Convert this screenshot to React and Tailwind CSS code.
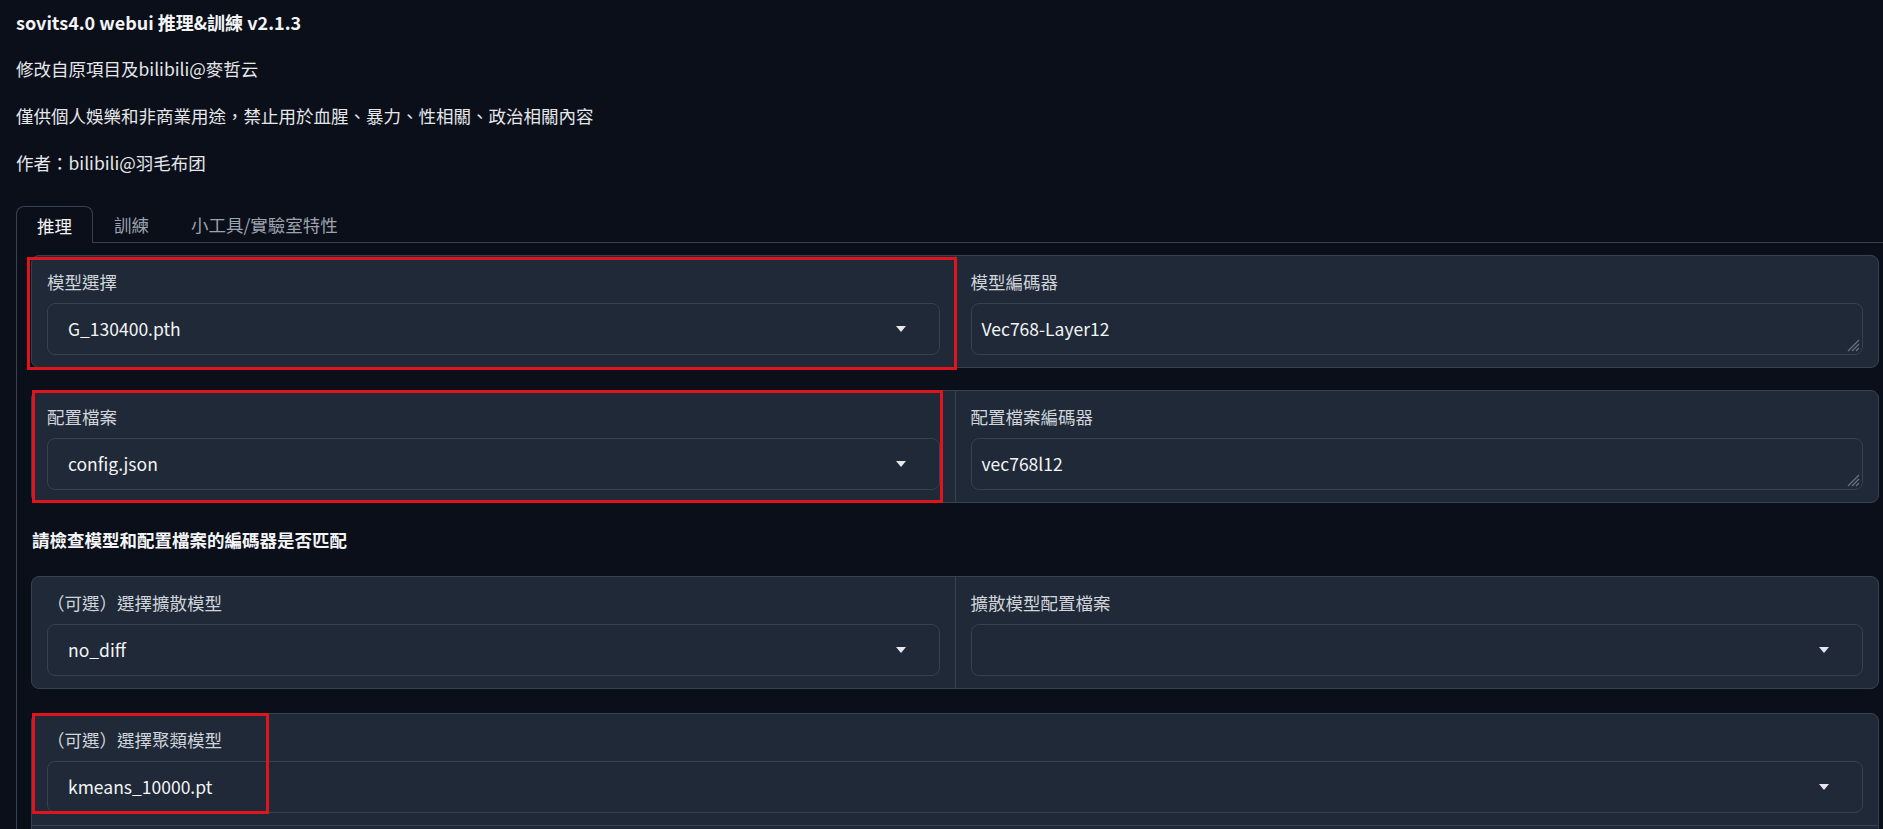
import React from 'react';

// Small caret used by every dropdown box.
function Caret() {
  return (
    <svg width="10" height="6" viewBox="0 0 10 6" className="shrink-0">
      <polygon points="0,0 10,0 5,6" fill="#e5e7eb" />
    </svg>
  );
}

// Diagonal resize grip for the textareas.
function Grip() {
  return (
    <svg width="13" height="13" viewBox="0 0 13 13" className="absolute right-[2px] bottom-[2px]">
      <path d="M12 1L1 12M12 5L5 12M12 9L9 12" stroke="#6b7280" strokeWidth="1.2" />
    </svg>
  );
}

function Dropdown({ value }) {
  return (
    <div className="h-[52px] rounded-[8px] border border-[#374151] bg-[#1f2937] flex items-center justify-between pl-[20px] pr-[33px] text-[#f3f4f6]">
      <span>{value}</span>
      <Caret />
    </div>
  );
}

function TextBox({ value }) {
  return (
    <div className="relative h-[52px] rounded-[8px] border border-[#374151] bg-[#1f2937] flex items-center pl-[10px] text-[#f3f4f6]">
      <span>{value}</span>
      <Grip />
    </div>
  );
}

function Block({ label, children }) {
  return (
    <div className="bg-[#1f2937] px-[15px] pt-[13px] pb-[12px]">
      <div className="h-[26px] leading-[26px] text-[#d1d5db]">{label}</div>
      <div className="mt-[8px]">{children}</div>
    </div>
  );
}

// Gradio form: blocks separated by a 1px line of the border colour.
function Form({ cols = 2, children, className = '' }) {
  return (
    <div
      className={`grid gap-px bg-[#374151] border border-[#374151] rounded-[8px] overflow-hidden ${
        cols === 2 ? 'grid-cols-2' : 'grid-cols-1'
      } ${className}`}
    >
      {children}
    </div>
  );
}

export default function App() {
  const tabs = ['推理', '訓練', '小工具/實驗室特性'];

  return (
    <div className="relative w-full h-[829px] overflow-hidden bg-[#0b0f19] text-[#e5e7eb] text-[17.5px] font-['Noto_Sans_CJK_TC','Noto_Sans',sans-serif]">
      {/* Header text */}
      <div className="px-[16px] pt-[9px] flex flex-col gap-[21px]">
        <p className="h-[26px] leading-[26px] font-bold text-[18px] text-[#f3f4f6]">sovits4.0 webui 推理&amp;訓練 v2.1.3</p>
        <p className="h-[26px] leading-[26px]">修改自原項目及bilibili@麥哲云</p>
        <p className="h-[26px] leading-[26px]">僅供個人娛樂和非商業用途，禁止用於血腥、暴力、性相關、政治相關內容</p>
        <p className="h-[26px] leading-[26px]">作者：bilibili@羽毛布团</p>
      </div>

      {/* Tabs */}
      <div className="ml-[16px] mt-[30px] flex h-[37px] border-b border-[#374151]">
        {tabs.map((t, i) => (
          <div
            key={t}
            className={
              i === 0
                ? 'h-[37px] -mb-px px-[20px] pt-[2px] flex items-center rounded-t-[8px] border border-b-0 border-[#374151] bg-[#0b0f19] text-[#f3f4f6]'
                : 'h-[36px] px-[21px] pt-[2px] flex items-center text-[#9ca3af]'
            }
          >
            {t}
          </div>
        ))}
      </div>

      {/* Tab panel */}
      <div className="ml-[16px] border-l border-[#374151] pl-[14px] pr-[4px] pt-[12px]">
        <Form>
          <Block label="模型選擇">
            <Dropdown value="G_130400.pth" />
          </Block>
          <Block label="模型編碼器">
            <TextBox value="Vec768-Layer12" />
          </Block>
        </Form>

        <Form className="mt-[22px]">
          <Block label="配置檔案">
            <Dropdown value="config.json" />
          </Block>
          <Block label="配置檔案編碼器">
            <TextBox value="vec768l12" />
          </Block>
        </Form>

        <p className="mt-[24px] h-[25px] leading-[25px] pl-px font-bold text-[#f3f4f6]">請檢查模型和配置檔案的編碼器是否匹配</p>

        <Form className="mt-[24px]">
          <Block label="（可選）選擇擴散模型">
            <Dropdown value="no_diff" />
          </Block>
          <Block label="擴散模型配置檔案">
            <Dropdown value="" />
          </Block>
        </Form>

        <Form cols={1} className="mt-[24px]">
          <Block label="（可選）選擇聚類模型">
            <Dropdown value="kmeans_10000.pt" />
          </Block>
          {/* next row of the form, only its top edge is in view */}
          <div className="bg-[#1f2937] h-[113px]" />
        </Form>
      </div>

      {/* Red annotation boxes drawn over the screenshot */}
      <div className="absolute left-[27px] top-[257px] w-[930px] h-[113px] border-[3px] border-[#e0141c] pointer-events-none" />
      <div className="absolute left-[32px] top-[390px] w-[911px] h-[113px] border-[3px] border-[#e0141c] pointer-events-none" />
      <div className="absolute left-[32px] top-[713px] w-[237px] h-[101px] border-[3px] border-[#e0141c] pointer-events-none" />
    </div>
  );
}
